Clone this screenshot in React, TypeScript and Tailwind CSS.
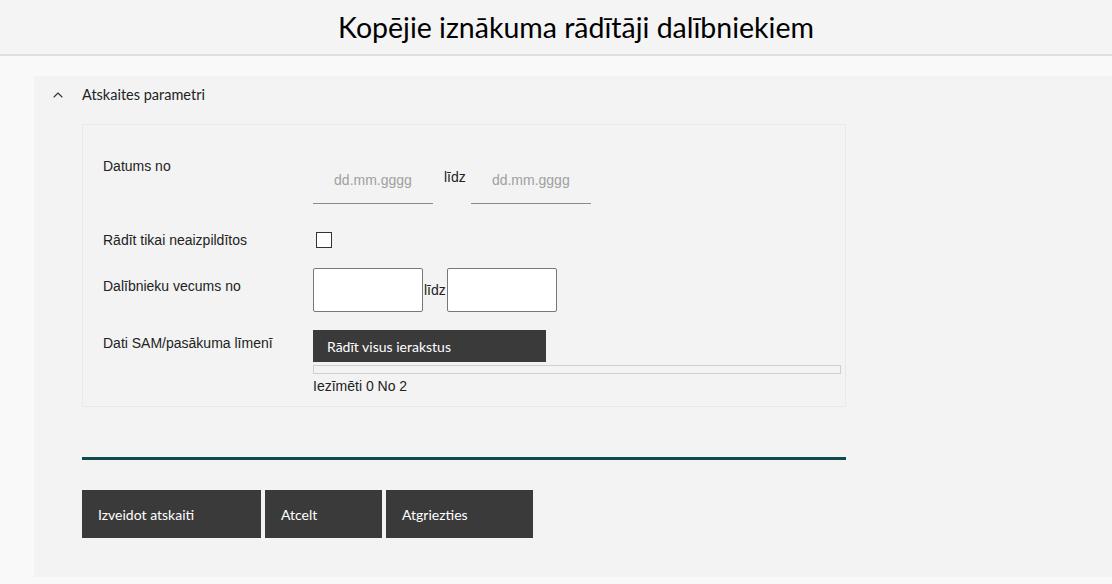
import { ChevronUp } from 'lucide-react';

const sans = "font-['Liberation_Sans',Arial,sans-serif]";
const ui = "font-['Lato','Open_Sans',sans-serif]";

function DateField() {
  return (
    <div className="flex h-[44px] w-[120px] items-center justify-center border-b border-[#8a8a8a]">
      <span className={`${sans} mt-[-2px] text-[14px] text-[#a0a0a0]`}>dd.mm.gggg</span>
    </div>
  );
}

function Label({ children, className = '' }: { children: React.ReactNode; className?: string }) {
  return <div className={`${sans} w-[210px] shrink-0 text-[14px] leading-[16px] text-[#222] ${className}`}>{children}</div>;
}

export default function App() {
  return (
    <div className="min-h-[584px] bg-[#f9f9f9]">
      <header className="flex h-[56px] items-center justify-center border-b-2 border-[#dedede] bg-[#f4f4f4] pl-[40px]">
        <h1 className={`${ui} text-[28.5px] text-black`}>Kopējie iznākuma rādītāji dalībniekiem</h1>
      </header>

      <section className="ml-[34px] mt-[20px] h-[501px] bg-[#f3f3f3] pl-[48px]">
        <div className="flex h-[38px] items-center">
          <ChevronUp className="-ml-[32px] mr-[16px] h-[16px] w-[16px] text-[#333]" strokeWidth={1.6} />
          <span className={`${ui} text-[14.5px] text-[#222]`}>Atskaites parametri</span>
        </div>

        <div className="mt-[10px] w-[764px] border border-[#e5eaf2] pb-[12px] pl-[20px] pt-[33px]">
          <div className="flex">
            <Label>Datums no</Label>
            <div className="mt-[2px] flex items-start">
              <DateField />
              <span className={`${sans} ml-[11px] mr-[5px] mt-[7px] text-[14px] text-[#222]`}>līdz</span>
              <DateField />
            </div>
          </div>

          <div className="mt-[28px] flex items-center">
            <Label>Rādīt tikai neaizpildītos</Label>
            <div className="ml-[3px] h-[16px] w-[16px] border border-[#333] bg-white" />
          </div>

          <div className="mt-[20px] flex">
            <Label className="mt-[10px]">Dalībnieku vecums no</Label>
            <div className="flex items-center">
              <div className="h-[44px] w-[110px] rounded-[2px] border border-[#777] bg-white" />
              <span className={`${sans} px-[1px] text-[14px] text-[#222]`}>līdz</span>
              <div className="h-[44px] w-[110px] rounded-[2px] border border-[#777] bg-white" />
            </div>
          </div>

          <div className="mt-[18px] flex">
            <Label className="mt-[5px]">Dati SAM/pasākuma līmenī</Label>
            <div className="flex-1 pr-[4px]">
              <button className={`${ui} flex h-[32px] w-[233px] items-center bg-[#3a3a3a] px-[14px] text-[14px] text-white`}>
                Rādīt visus ierakstus
              </button>
              <div className="mt-[3px] h-[9px] w-[528px] border border-[#cfcfcf] bg-[#f3f3f3]" />
              <div className={`${sans} mt-[4px] text-[14px] leading-[16px] text-[#222]`}>Iezīmēti 0 No 2</div>
            </div>
          </div>
        </div>

        <div className="mt-[50px] h-[3px] w-[764px] bg-[#0f4b4b]" />

        <div className="mt-[30px] flex gap-[4px]">
          <button className={`${ui} h-[48px] w-[179px] bg-[#3a3a3a] px-[16px] text-left text-[14px] text-white`}>Izveidot atskaiti</button>
          <button className={`${ui} h-[48px] w-[117px] bg-[#3a3a3a] px-[16px] text-left text-[14px] text-white`}>Atcelt</button>
          <button className={`${ui} h-[48px] w-[147px] bg-[#3a3a3a] px-[16px] text-left text-[14px] text-white`}>Atgriezties</button>
        </div>
      </section>
    </div>
  );
}
